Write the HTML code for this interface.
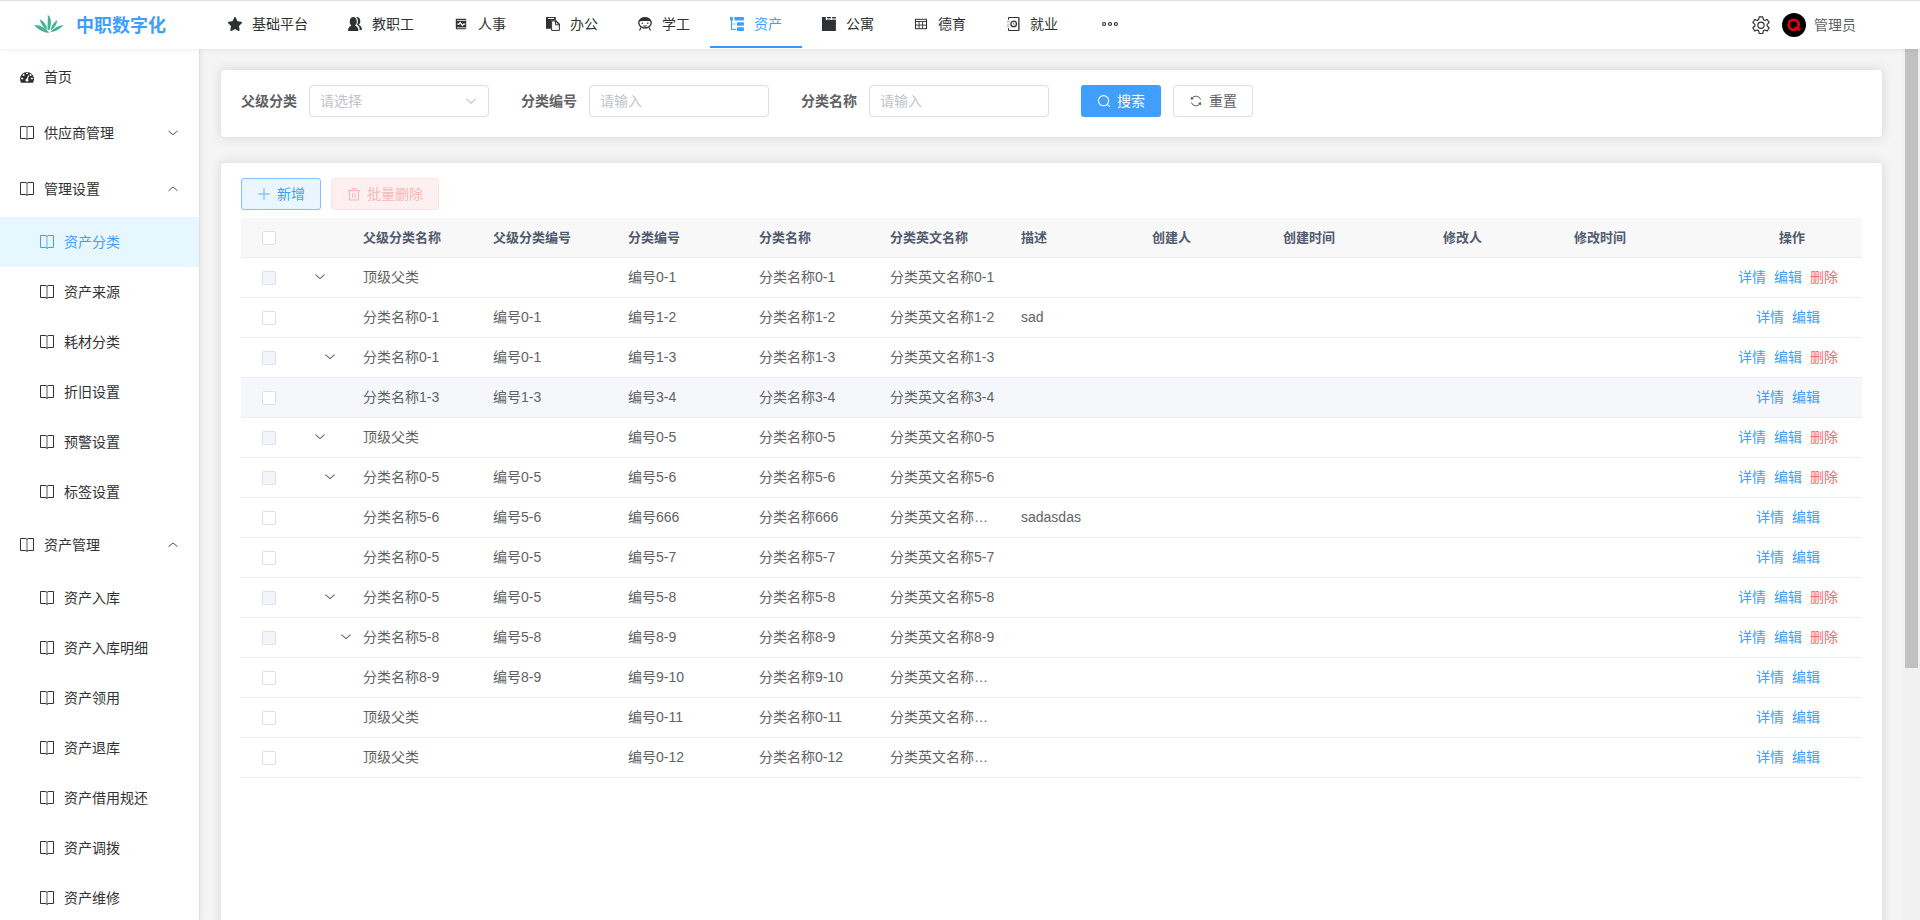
<!DOCTYPE html>
<html lang="zh-CN">
<head>
<meta charset="utf-8">
<title>中职数字化</title>
<style>
*{box-sizing:border-box;margin:0;padding:0}
html,body{width:1920px;height:920px;overflow:hidden}
body{font-family:"Liberation Sans","Noto Sans CJK SC",sans-serif;font-size:14px;color:#303133;background:#f5f5f5;position:relative}
svg{display:block;flex:none}
i{font-style:normal}
#hd{position:absolute;left:0;top:0;width:1920px;height:49px;background:#fff;border-top:1px solid #dfe1df;box-shadow:0 1px 4px rgba(0,21,41,.08);z-index:10}
#logo{position:absolute;left:33.500px;top:13px}
#brand{position:absolute;left:76px;top:2px;height:48px;line-height:47px;font-size:18px;font-weight:bold;color:#409eff;white-space:nowrap}
#nav{position:absolute;left:208px;top:0;height:48px;display:flex}
.ni{height:48px;padding:0 20px;display:flex;align-items:center;color:#303133;font-size:14px;white-space:nowrap;position:relative}
.ni svg{margin-right:10px;position:relative;top:-1px}
.ni span{position:relative;top:-2px}
.ni.on{color:#409eff}
.ni.on:after{content:"";position:absolute;left:0;right:0;bottom:1px;height:2px;background:#3a96fb}
#more{position:absolute;left:1101px;top:19px}
#gear{position:absolute;left:1752px;top:15px}
#ava{position:absolute;left:1782px;top:12px}
#uname{position:absolute;left:1814px;top:0;line-height:48px;font-size:14px;color:#606266}
#sb{position:absolute;left:0;top:49px;width:200px;height:871px;background:#fff;border-right:1px solid #dcdfe6;box-shadow:2px 0 6px rgba(0,21,41,.06);z-index:5}
.m1,.m2{position:relative;display:flex;align-items:center;color:#303133;font-size:14px;white-space:nowrap}
.m1{height:56px;padding-left:20px}
.m2{height:50px;padding-left:40px}
.m1>svg:first-child,.m2>svg:first-child{margin-right:10px}
.m1 span,.m2 span{position:relative;top:-1px}
.m2.on{background:#e6f7ff;color:#409eff}
.arr{position:absolute;left:167px;top:50%;margin-top:-4px}
.card{position:absolute;left:221px;width:1661px;background:#fff;border-radius:3px;box-shadow:0 0 0 1px #e5e7f0,0 0 12px 1px rgba(0,0,0,.115)}
#c1{top:70px;height:67px}
#c2{top:163px;height:800px}
.lbl{position:absolute;top:15px;line-height:32px;font-weight:bold;color:#606266;font-size:14px}
.inp{position:absolute;top:15px;width:180px;height:32px;border:1px solid #dcdfe6;border-radius:4px;padding-left:10px;line-height:30px;color:#c0c4cc;font-size:14px;background:#fff}
.btn{position:absolute;height:32px;border-radius:3px;font-size:14px;display:flex;align-items:center;white-space:nowrap}
.btn span{position:relative;top:-1px}
#tbl{position:absolute;left:20px;top:55px;width:1621px;font-size:14px;color:#606266}
.tr{position:relative;height:40px;border-bottom:1px solid #e9edf5;line-height:39px}
.tr.th{background:#f8f8f9;font-size:13px;font-weight:bold;color:#515a6e}
.tr.hov{background:#f5f7fa}
.c{position:absolute;top:0;white-space:nowrap}
.th .c{top:0}
.c.el{max-width:105px;overflow:hidden;text-overflow:ellipsis}
.lk{color:#409eff}
.lk.del{color:#f56c6c}
.cb{position:absolute;left:21px;top:13px;width:14px;height:14px;border:1px solid #dcdfe6;border-radius:2px;background:#fff}
.cb.dis{background:#f3f5fa}
.ta{position:absolute;top:15px}
#trk{position:absolute;left:1903px;top:49px;width:17px;height:871px;background:#f1f1f1;z-index:4}
#thm{position:absolute;left:1905px;top:49px;width:13px;height:619px;background:#c1c1c1;z-index:6}
</style>
</head>
<body>
<div id="hd">
<div id="logo"><svg width="30" height="20" viewBox="-.5 0 30 20"><g fill="#41b48f"><path d="M13.200 .800C16.200 3 17.700 7.500 15.200 15.600 14.700 16.200 13.600 16.200 13.300 15.600 12.500 10 13.900 5 13.200 .800z"/><path d="M5.100 5.200C8.800 6.500 12.200 11 13.100 16 9.300 14 6.300 10 5.100 5.200z"/><path d="M23.100 5.900C22.100 10.600 19.600 14.200 16.200 16.200 16.700 11.500 19.500 7.900 23.100 5.900z"/><path d="M-.100 10.900C5.200 10.600 11.200 13.800 14.800 18.800 9 18.600 3.400 15.500-.100 10.900z"/><path d="M29.100 10.900C25.600 15.200 21 17.500 15.800 18 19.400 13.700 24 11.200 29.100 10.900z"/></g></svg></div>
<div id="brand">中职数字化</div>
<div id="nav">
<div class="ni"><svg width="14" height="14" viewBox="0 0 128 128"><path fill="currentColor" d="M70.66 4.328l14.01 29.693c1.088 2.29 3.177 3.882 5.603 4.25l31.347 4.76c6.087.926 8.528 8.756 4.117 13.247L103.06 79.395c-1.75 1.78-2.544 4.352-2.132 6.867l5.352 32.641c1.043 6.337-5.33 11.182-10.778 8.19l-28.039-15.409a7.13 7.13 0 0 0-6.911 0l-28.039 15.41c-5.448 2.99-11.821-1.854-10.777-8.19l5.352-32.642c.411-2.515-.383-5.087-2.133-6.867L2.264 56.278c-4.412-4.49-1.97-12.32 4.116-13.248l31.347-4.758c2.426-.369 4.515-1.961 5.603-4.251L57.340 4.328c2.72-5.77 10.6-5.77 13.32 0z"/></svg><span>基础平台</span></div>
<div class="ni"><svg width="14" height="14" viewBox="0 0 128 128"><path fill="currentColor" d="M95.648 118.762c0 5.035-3.563 9.121-7.979 9.121H7.98c-4.416 0-7.979-4.086-7.979-9.121C0 100.519 15.408 83.47 31.152 76.75c-9.099-6.43-15.216-17.863-15.216-30.987v-9.128c0-20.16 14.293-36.518 31.893-36.518s31.894 16.358 31.894 36.518v9.128c0 13.124-6.118 24.557-15.217 30.987 15.744 6.72 31.142 23.769 31.142 42.012z"/><path fill="currentColor" d="M106.032 118.929h13.984c4.416 0 7.979-3.802 7.979-8.486 0-16.964-15.398-32.822-31.142-39.072 9.099-5.991 15.217-16.614 15.217-28.818v-8.491c0-18.75-14.294-33.958-31.894-33.958-2.15 0-4.244.231-6.27.661 9.62 7.023 16.092 19.102 16.092 32.797v9.128c0 9.743-3.108 18.926-8.492 26.165 13.857 9.648 25.296 26.042 25.296 43.587 0 2.312-.284 4.488-.77 6.487z"/></svg><span>教职工</span></div>
<div class="ni"><svg width="14" height="14" viewBox="0 0 14 14"><rect x="1.800" y="1.800" width="10.400" height="10.400" rx="0.700" fill="currentColor"/><path d="M2.900 3.450h9.300M2.900 10.800h9.300" stroke="#fff" stroke-width=".8" fill="none"/><path d="M3.200 7.050h1.900l1.100-1.500 2.200 2.900 1.200-1.400h1.700" stroke="#fff" stroke-width="1.250" fill="none"/></svg><span>人事</span></div>
<div class="ni"><svg width="14" height="14" viewBox="0 0 14 14"><path fill="currentColor" d="M0 0h9.8v3.4H5.1v8.4H0z"/><rect x="1.9" y=".95" width="6.2" height="1.05" fill="#fff"/><path d="M5.6 3.9h3.9l3.9 3.9v5.6H5.6z" fill="#fff" stroke="currentColor" stroke-width="1"/><path d="M9.5 3.9v3.9h3.9" fill="none" stroke="currentColor" stroke-width="1"/><path d="M9.5 3.4l4.4 4.4" stroke="currentColor" stroke-width="1.2" fill="none"/></svg><span>办公</span></div>
<div class="ni"><svg width="14" height="14" viewBox="0 0 14 14"><ellipse cx="7" cy="5.850" rx="6.250" ry="5.150" fill="#fff" stroke="currentColor" stroke-width="1.350"/><path d="M.700 4.700C1.300 1.700 4 .150 7 .150s5.700 1.550 6.300 4.550C11.600 3.800 9.500 3.900 7 3.900S2.400 3.800.700 4.700z" fill="currentColor"/><circle cx="4.450" cy="6.300" r=".8" fill="currentColor"/><circle cx="9.750" cy="6.300" r=".8" fill="currentColor"/><path d="M4.500 8.300h5c-.5 1.300-1.400 1.900-2.500 1.900s-2-.6-2.500-1.900z" fill="currentColor" opacity=".6"/><path d="M3 10.400L1.500 13.600M11 10.400l1.500 3.200" stroke="currentColor" stroke-width="1.150" fill="none"/></svg><span>学工</span></div>
<div class="ni on"><svg width="14" height="14" viewBox="0 0 14 14"><g fill="currentColor"><rect x="0" y="0" width="2.900" height="3.400" rx=".5"/><rect x="4.400" y="0" width="9.500" height="3.500" rx=".3"/><rect x="7" y="5.200" width="6.900" height="3.600" rx=".3"/><rect x="7" y="10.300" width="6.900" height="3.600" rx=".3"/><rect x="1" y="3" width="1.050" height="9.900"/><rect x="1" y="11.800" width="4.900" height="1.100"/><rect x="2" y="6.500" width="3.900" height="1" opacity=".55"/></g></svg><span>资产</span></div>
<div class="ni"><svg width="14" height="14" viewBox="0 0 14 14"><g fill="currentColor"><path d="M0 0h3.800v2.900H13.900v11H0z"/><rect x="5" y="0" width="3.800" height="1"/><rect x="10.100" y="0" width="3.800" height="1"/><rect x="5" y="1" width="3.800" height="2" opacity=".4"/><rect x="10.100" y="1" width="3.800" height="2" opacity=".4"/></g></svg><span>公寓</span></div>
<div class="ni"><svg width="14" height="14" viewBox="0 0 14 14"><rect x="1.500" y="2.300" width="11" height="9.400" fill="none" stroke="currentColor" stroke-width="1"/><path d="M1.500 4.500h11M1.500 8.100h11M5.050 4.500v7.200M8.600 4.500v7.200" stroke="currentColor" stroke-width="1" fill="none" opacity=".9"/></svg><span>德育</span></div>
<div class="ni"><svg width="14" height="14" viewBox="0 0 14 14"><path d="M2.500 2.800V.5h10.400v13H2.500v-2.400" fill="none" stroke="currentColor" stroke-width="1"/><path d="M12.900.5v13" stroke="currentColor" stroke-width="1.300" opacity=".5"/><path d="M1 4.400h2.700M1 7.200h2.700M1 9.400h2.700" stroke="currentColor" stroke-width=".7" opacity=".6"/><circle cx="7.700" cy="6.900" r="2.750" fill="none" stroke="currentColor" stroke-width="1.250"/><path d="M7.500 5.500v1.700h1.400" stroke="currentColor" stroke-width=".7" fill="none" opacity=".7"/></svg><span>就业</span></div>
</div>
<div id="more"><svg width="18" height="8" viewBox="0 0 18 8"><g fill="none" stroke="#303133" stroke-width="1.200"><circle cx="3.100" cy="4" r="1.500"/><circle cx="9" cy="4" r="1.500"/><circle cx="14.900" cy="4" r="1.500"/></g></svg></div>
<div id="gear"><svg width="18" height="18" viewBox="0 0 18 18"><g transform="translate(9 9.200) scale(1.070) translate(-9 -8.750)"><path d="M7.300 1h3.400l.5 2.500 1.300.75 2.400-.85 1.700 2.950-1.900 1.650v1.500l1.900 1.650-1.700 2.950-2.400-.85-1.300.75-.5 2.500H7.300l-.5-2.500-1.300-.75-2.400.85-1.700-2.950 1.900-1.650V8l-1.900-1.650 1.700-2.950 2.400.85 1.300-.75z" fill="none" stroke="#303133" stroke-width="1.100" stroke-linejoin="round"/><circle cx="9" cy="8.750" r="2.900" fill="none" stroke="#303133" stroke-width="1.100"/></g></svg></div>
<div id="ava"><svg width="24" height="24" viewBox="0 0 24 24"><circle cx="12" cy="12" r="12" fill="#000"/><circle cx="11.700" cy="11.800" r="5.050" fill="none" stroke="#e60012" stroke-width="2.700"/><path d="M12.800 14.300l5.600 2.700" stroke="#e60012" stroke-width="2.500" fill="none"/></svg></div>
<div id="uname">管理员</div>
</div>
<div id="sb">
<div class="m1"><svg width="14" height="14" viewBox="0 0 14 14"><g transform="translate(0 -1)"><path d="M1.100 13.700A7 7 0 1 1 12.900 13.700z" fill="currentColor"/><g fill="#fff"><rect x="1.100" y="8.850" width="2.100" height="1.300" rx=".3"/><rect x="10.800" y="8.850" width="2.100" height="1.300" rx=".3"/><circle cx="3.600" cy="5.950" r="1"/><circle cx="10.500" cy="5.950" r="1"/><rect x="6" y="3.800" width="2" height="1.300" rx=".3"/><circle cx="7" cy="11.200" r="1.350"/><path d="M6.300 10.700L8.200 6.200 9 6.500 7.700 11.200z"/></g></g></svg><span>首页</span></div>
<div class="m1"><svg width="14" height="14" viewBox="0 0 14 14"><path d="M.5 .5h5.400L7 1.500 8.100 .5h5.400v12H8.100L7 13.500 5.900 12.500H.5z" fill="none" stroke="currentColor" stroke-width="1" stroke-linejoin="miter"/><path d="M7 1.400v12" stroke="currentColor" stroke-width="1.250" opacity=".62"/></svg><span>供应商管理</span><svg class="arr" width="12" height="8" viewBox="0 0 12 8"><path d="M1.500 2L6 5.700 10.500 2" fill="none" stroke="#45474b" stroke-width="0.95"/></svg></div>
<div class="m1"><svg width="14" height="14" viewBox="0 0 14 14"><path d="M.5 .5h5.400L7 1.500 8.100 .5h5.400v12H8.100L7 13.500 5.900 12.500H.5z" fill="none" stroke="currentColor" stroke-width="1" stroke-linejoin="miter"/><path d="M7 1.400v12" stroke="currentColor" stroke-width="1.250" opacity=".62"/></svg><span>管理设置</span><svg class="arr" width="12" height="8" viewBox="0 0 12 8"><path d="M1.500 5.700L6 2l4.500 3.700" fill="none" stroke="#45474b" stroke-width="0.95"/></svg></div>
<div class="m2 on"><svg width="14" height="14" viewBox="0 0 14 14"><path d="M.5 .5h5.400L7 1.500 8.100 .5h5.400v12H8.100L7 13.500 5.900 12.500H.5z" fill="none" stroke="currentColor" stroke-width="1" stroke-linejoin="miter"/><path d="M7 1.400v12" stroke="currentColor" stroke-width="1.250" opacity=".62"/></svg><span>资产分类</span></div>
<div class="m2"><svg width="14" height="14" viewBox="0 0 14 14"><path d="M.5 .5h5.400L7 1.500 8.100 .5h5.400v12H8.100L7 13.500 5.900 12.500H.5z" fill="none" stroke="currentColor" stroke-width="1" stroke-linejoin="miter"/><path d="M7 1.400v12" stroke="currentColor" stroke-width="1.250" opacity=".62"/></svg><span>资产来源</span></div>
<div class="m2"><svg width="14" height="14" viewBox="0 0 14 14"><path d="M.5 .5h5.400L7 1.500 8.100 .5h5.400v12H8.100L7 13.500 5.900 12.500H.5z" fill="none" stroke="currentColor" stroke-width="1" stroke-linejoin="miter"/><path d="M7 1.400v12" stroke="currentColor" stroke-width="1.250" opacity=".62"/></svg><span>耗材分类</span></div>
<div class="m2"><svg width="14" height="14" viewBox="0 0 14 14"><path d="M.5 .5h5.400L7 1.500 8.100 .5h5.400v12H8.100L7 13.500 5.900 12.500H.5z" fill="none" stroke="currentColor" stroke-width="1" stroke-linejoin="miter"/><path d="M7 1.400v12" stroke="currentColor" stroke-width="1.250" opacity=".62"/></svg><span>折旧设置</span></div>
<div class="m2"><svg width="14" height="14" viewBox="0 0 14 14"><path d="M.5 .5h5.400L7 1.500 8.100 .5h5.400v12H8.100L7 13.500 5.900 12.500H.5z" fill="none" stroke="currentColor" stroke-width="1" stroke-linejoin="miter"/><path d="M7 1.400v12" stroke="currentColor" stroke-width="1.250" opacity=".62"/></svg><span>预警设置</span></div>
<div class="m2"><svg width="14" height="14" viewBox="0 0 14 14"><path d="M.5 .5h5.400L7 1.500 8.100 .5h5.400v12H8.100L7 13.500 5.900 12.500H.5z" fill="none" stroke="currentColor" stroke-width="1" stroke-linejoin="miter"/><path d="M7 1.400v12" stroke="currentColor" stroke-width="1.250" opacity=".62"/></svg><span>标签设置</span></div>
<div class="m1"><svg width="14" height="14" viewBox="0 0 14 14"><path d="M.5 .5h5.400L7 1.500 8.100 .5h5.400v12H8.100L7 13.500 5.900 12.500H.5z" fill="none" stroke="currentColor" stroke-width="1" stroke-linejoin="miter"/><path d="M7 1.400v12" stroke="currentColor" stroke-width="1.250" opacity=".62"/></svg><span>资产管理</span><svg class="arr" width="12" height="8" viewBox="0 0 12 8"><path d="M1.500 5.700L6 2l4.500 3.700" fill="none" stroke="#45474b" stroke-width="0.95"/></svg></div>
<div class="m2"><svg width="14" height="14" viewBox="0 0 14 14"><path d="M.5 .5h5.400L7 1.500 8.100 .5h5.400v12H8.100L7 13.500 5.900 12.500H.5z" fill="none" stroke="currentColor" stroke-width="1" stroke-linejoin="miter"/><path d="M7 1.400v12" stroke="currentColor" stroke-width="1.250" opacity=".62"/></svg><span>资产入库</span></div>
<div class="m2"><svg width="14" height="14" viewBox="0 0 14 14"><path d="M.5 .5h5.400L7 1.500 8.100 .5h5.400v12H8.100L7 13.500 5.900 12.500H.5z" fill="none" stroke="currentColor" stroke-width="1" stroke-linejoin="miter"/><path d="M7 1.400v12" stroke="currentColor" stroke-width="1.250" opacity=".62"/></svg><span>资产入库明细</span></div>
<div class="m2"><svg width="14" height="14" viewBox="0 0 14 14"><path d="M.5 .5h5.400L7 1.500 8.100 .5h5.400v12H8.100L7 13.500 5.900 12.500H.5z" fill="none" stroke="currentColor" stroke-width="1" stroke-linejoin="miter"/><path d="M7 1.400v12" stroke="currentColor" stroke-width="1.250" opacity=".62"/></svg><span>资产领用</span></div>
<div class="m2"><svg width="14" height="14" viewBox="0 0 14 14"><path d="M.5 .5h5.400L7 1.500 8.100 .5h5.400v12H8.100L7 13.500 5.900 12.500H.5z" fill="none" stroke="currentColor" stroke-width="1" stroke-linejoin="miter"/><path d="M7 1.400v12" stroke="currentColor" stroke-width="1.250" opacity=".62"/></svg><span>资产退库</span></div>
<div class="m2"><svg width="14" height="14" viewBox="0 0 14 14"><path d="M.5 .5h5.400L7 1.500 8.100 .5h5.400v12H8.100L7 13.500 5.900 12.500H.5z" fill="none" stroke="currentColor" stroke-width="1" stroke-linejoin="miter"/><path d="M7 1.400v12" stroke="currentColor" stroke-width="1.250" opacity=".62"/></svg><span>资产借用规还</span></div>
<div class="m2"><svg width="14" height="14" viewBox="0 0 14 14"><path d="M.5 .5h5.400L7 1.500 8.100 .5h5.400v12H8.100L7 13.500 5.900 12.500H.5z" fill="none" stroke="currentColor" stroke-width="1" stroke-linejoin="miter"/><path d="M7 1.400v12" stroke="currentColor" stroke-width="1.250" opacity=".62"/></svg><span>资产调拨</span></div>
<div class="m2"><svg width="14" height="14" viewBox="0 0 14 14"><path d="M.5 .5h5.400L7 1.500 8.100 .5h5.400v12H8.100L7 13.500 5.900 12.500H.5z" fill="none" stroke="currentColor" stroke-width="1" stroke-linejoin="miter"/><path d="M7 1.400v12" stroke="currentColor" stroke-width="1.250" opacity=".62"/></svg><span>资产维修</span></div>
</div>
<div class="card" id="c1">
<div class="lbl" style="left:20px">父级分类</div>
<div class="inp" style="left:88px">请选择<svg style="position:absolute;left:155px;top:11px" width="12" height="8" viewBox="0 0 12 8"><path d="M1.300 1.800L6 6.200 10.700 1.800" fill="none" stroke="#c0c4cc" stroke-width="1.150"/></svg></div>
<div class="lbl" style="left:300px">分类编号</div>
<div class="inp" style="left:368px">请输入</div>
<div class="lbl" style="left:580px">分类名称</div>
<div class="inp" style="left:648px">请输入</div>
<div class="btn" style="left:860px;top:15px;width:80px;background:#409eff;color:#fff;padding-left:16px"><svg width="14" height="14" viewBox="0 0 14 14"><circle cx="6.550" cy="6.700" r="5.100" fill="none" stroke="#fff" stroke-width="1.050"/><path d="M10.200 10.400l2.700 2.300" stroke="#fff" stroke-width="1.050" fill="none"/></svg><span style="margin-left:6px">搜索</span></div>
<div class="btn" style="left:952px;top:15px;width:80px;background:#fff;border:1px solid #dcdfe6;color:#606266;padding-left:15px"><svg width="14" height="14" viewBox="0 0 14 14"><g fill="none" stroke="#606266" stroke-width="1"><path d="M2.300 5.300A5 5 0 0 1 11.700 5.600"/><path d="M11.700 8.700A5 5 0 0 1 2.300 8.400"/></g><path d="M1.800 2.600l.3 3.100 3-.7z" fill="#606266"/><path d="M12.200 11.400l-.3-3.100-3 .7z" fill="#606266"/></svg><span style="margin-left:6px">重置</span></div>
</div>
<div class="card" id="c2">
<div class="btn" style="left:20px;top:15px;width:80px;background:#e9f6ff;border:1px solid #84c0ff;color:#409eff;padding-left:15px"><svg width="14" height="14" viewBox="0 0 14 14"><path d="M7 1.200v11.600M1.200 7h11.600" stroke="#409eff" stroke-width="1.500" opacity=".55"/></svg><span style="margin-left:6px">新增</span></div>
<div class="btn" style="left:110px;top:15px;width:108px;background:#fef0f0;border:1px solid #fde2e2;color:#fab6b6;padding-left:15px"><svg width="14" height="14" viewBox="0 0 14 14"><g fill="none" stroke="#fab6b6" stroke-width="1"><path d="M1 3.500h12"/><path d="M5 3.500v-2h4v2"/><path d="M2.500 3.500v9.500h9V3.500"/><path d="M5.700 6v4.800M8.300 6v4.800"/></g></svg><span style="margin-left:6px">批量删除</span></div>
<div id="tbl">
<div class="tr th"><i class="cb"></i><span class="c" style="left:122px">父级分类名称</span><span class="c" style="left:252px">父级分类编号</span><span class="c" style="left:387px">分类编号</span><span class="c" style="left:518px">分类名称</span><span class="c" style="left:649px">分类英文名称</span><span class="c" style="left:780px">描述</span><span class="c" style="left:911px">创建人</span><span class="c" style="left:1042px">创建时间</span><span class="c" style="left:1202px">修改人</span><span class="c" style="left:1333px">修改时间</span><span class="c" style="left:1538px">操作</span></div>
<div class="tr"><i class="cb dis"></i><svg class="ta" style="left:73px" width="12" height="8" viewBox="0 0 12 8"><path d="M1.400 1.600L6 5.600 10.600 1.600" fill="none" stroke="#606266" stroke-width="1.050"/></svg><span class="c" style="left:122px">顶级父类</span><span class="c" style="left:387px">编号0-1</span><span class="c" style="left:518px">分类名称0-1</span><span class="c el" style="left:649px">分类英文名称0-1</span><span class="c lk" style="left:1497px">详情</span><span class="c lk" style="left:1533px">编辑</span><span class="c lk del" style="left:1569px">删除</span></div>
<div class="tr"><i class="cb"></i><span class="c" style="left:122px">分类名称0-1</span><span class="c" style="left:252px">编号0-1</span><span class="c" style="left:387px">编号1-2</span><span class="c" style="left:518px">分类名称1-2</span><span class="c el" style="left:649px">分类英文名称1-2</span><span class="c" style="left:780px">sad</span><span class="c lk" style="left:1515px">详情</span><span class="c lk" style="left:1551px">编辑</span></div>
<div class="tr"><i class="cb dis"></i><svg class="ta" style="left:83px" width="12" height="8" viewBox="0 0 12 8"><path d="M1.400 1.600L6 5.600 10.600 1.600" fill="none" stroke="#606266" stroke-width="1.050"/></svg><span class="c" style="left:122px">分类名称0-1</span><span class="c" style="left:252px">编号0-1</span><span class="c" style="left:387px">编号1-3</span><span class="c" style="left:518px">分类名称1-3</span><span class="c el" style="left:649px">分类英文名称1-3</span><span class="c lk" style="left:1497px">详情</span><span class="c lk" style="left:1533px">编辑</span><span class="c lk del" style="left:1569px">删除</span></div>
<div class="tr hov"><i class="cb"></i><span class="c" style="left:122px">分类名称1-3</span><span class="c" style="left:252px">编号1-3</span><span class="c" style="left:387px">编号3-4</span><span class="c" style="left:518px">分类名称3-4</span><span class="c el" style="left:649px">分类英文名称3-4</span><span class="c lk" style="left:1515px">详情</span><span class="c lk" style="left:1551px">编辑</span></div>
<div class="tr"><i class="cb dis"></i><svg class="ta" style="left:73px" width="12" height="8" viewBox="0 0 12 8"><path d="M1.400 1.600L6 5.600 10.600 1.600" fill="none" stroke="#606266" stroke-width="1.050"/></svg><span class="c" style="left:122px">顶级父类</span><span class="c" style="left:387px">编号0-5</span><span class="c" style="left:518px">分类名称0-5</span><span class="c el" style="left:649px">分类英文名称0-5</span><span class="c lk" style="left:1497px">详情</span><span class="c lk" style="left:1533px">编辑</span><span class="c lk del" style="left:1569px">删除</span></div>
<div class="tr"><i class="cb dis"></i><svg class="ta" style="left:83px" width="12" height="8" viewBox="0 0 12 8"><path d="M1.400 1.600L6 5.600 10.600 1.600" fill="none" stroke="#606266" stroke-width="1.050"/></svg><span class="c" style="left:122px">分类名称0-5</span><span class="c" style="left:252px">编号0-5</span><span class="c" style="left:387px">编号5-6</span><span class="c" style="left:518px">分类名称5-6</span><span class="c el" style="left:649px">分类英文名称5-6</span><span class="c lk" style="left:1497px">详情</span><span class="c lk" style="left:1533px">编辑</span><span class="c lk del" style="left:1569px">删除</span></div>
<div class="tr"><i class="cb"></i><span class="c" style="left:122px">分类名称5-6</span><span class="c" style="left:252px">编号5-6</span><span class="c" style="left:387px">编号666</span><span class="c" style="left:518px">分类名称666</span><span class="c el" style="left:649px">分类英文名称666</span><span class="c" style="left:780px">sadasdas</span><span class="c lk" style="left:1515px">详情</span><span class="c lk" style="left:1551px">编辑</span></div>
<div class="tr"><i class="cb"></i><span class="c" style="left:122px">分类名称0-5</span><span class="c" style="left:252px">编号0-5</span><span class="c" style="left:387px">编号5-7</span><span class="c" style="left:518px">分类名称5-7</span><span class="c el" style="left:649px">分类英文名称5-7</span><span class="c lk" style="left:1515px">详情</span><span class="c lk" style="left:1551px">编辑</span></div>
<div class="tr"><i class="cb dis"></i><svg class="ta" style="left:83px" width="12" height="8" viewBox="0 0 12 8"><path d="M1.400 1.600L6 5.600 10.600 1.600" fill="none" stroke="#606266" stroke-width="1.050"/></svg><span class="c" style="left:122px">分类名称0-5</span><span class="c" style="left:252px">编号0-5</span><span class="c" style="left:387px">编号5-8</span><span class="c" style="left:518px">分类名称5-8</span><span class="c el" style="left:649px">分类英文名称5-8</span><span class="c lk" style="left:1497px">详情</span><span class="c lk" style="left:1533px">编辑</span><span class="c lk del" style="left:1569px">删除</span></div>
<div class="tr"><i class="cb dis"></i><svg class="ta" style="left:99px" width="12" height="8" viewBox="0 0 12 8"><path d="M1.400 1.600L6 5.600 10.600 1.600" fill="none" stroke="#606266" stroke-width="1.050"/></svg><span class="c" style="left:122px">分类名称5-8</span><span class="c" style="left:252px">编号5-8</span><span class="c" style="left:387px">编号8-9</span><span class="c" style="left:518px">分类名称8-9</span><span class="c el" style="left:649px">分类英文名称8-9</span><span class="c lk" style="left:1497px">详情</span><span class="c lk" style="left:1533px">编辑</span><span class="c lk del" style="left:1569px">删除</span></div>
<div class="tr"><i class="cb"></i><span class="c" style="left:122px">分类名称8-9</span><span class="c" style="left:252px">编号8-9</span><span class="c" style="left:387px">编号9-10</span><span class="c" style="left:518px">分类名称9-10</span><span class="c el" style="left:649px">分类英文名称9-10</span><span class="c lk" style="left:1515px">详情</span><span class="c lk" style="left:1551px">编辑</span></div>
<div class="tr"><i class="cb"></i><span class="c" style="left:122px">顶级父类</span><span class="c" style="left:387px">编号0-11</span><span class="c" style="left:518px">分类名称0-11</span><span class="c el" style="left:649px">分类英文名称0-11</span><span class="c lk" style="left:1515px">详情</span><span class="c lk" style="left:1551px">编辑</span></div>
<div class="tr"><i class="cb"></i><span class="c" style="left:122px">顶级父类</span><span class="c" style="left:387px">编号0-12</span><span class="c" style="left:518px">分类名称0-12</span><span class="c el" style="left:649px">分类英文名称0-12</span><span class="c lk" style="left:1515px">详情</span><span class="c lk" style="left:1551px">编辑</span></div>
</div>
</div>
<div id="trk"></div><div id="thm"></div>
</body>
</html>
